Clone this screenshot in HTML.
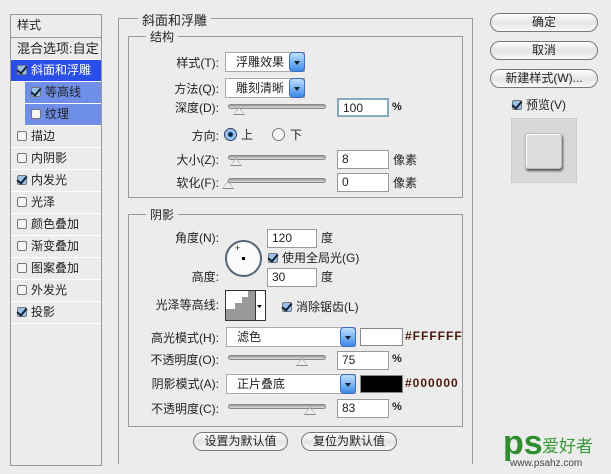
<!DOCTYPE html>
<html><head><meta charset="utf-8"><style>
*{box-sizing:border-box;margin:0;padding:0}
body{width:611px;height:474px;background:#ececec;position:relative;overflow:hidden;font-family:"Liberation Sans","Noto Sans CJK SC",sans-serif;font-size:12px;color:#222}
.a{position:absolute;white-space:nowrap}
.lp{position:absolute;left:10px;top:14px;width:92px;height:452px;border:1px solid #999;background:#ececec}
.row{position:absolute;left:0;width:90px;height:22px;line-height:21px;padding-left:6px;border-bottom:1px solid #fff}
.cb{display:inline-block;width:10px;height:10px;border:1px solid #777;border-radius:2px;background:#f6f6f6;vertical-align:-1px;margin-right:4px;position:relative}
.cb.on::after{content:"";position:absolute;left:1px;top:-2px;width:4px;height:8px;border:solid #123;border-width:0 2px 2px 0;transform:rotate(40deg)}
.cb.on{background:#9cc0ec}
.box{position:absolute;border:1px solid #999}
.lbl{position:absolute;text-align:right;white-space:nowrap}
.dd{position:absolute;height:20px;background:#fff;border:1px solid #aaa;line-height:18px;padding-left:10px}
.dd i{position:absolute;right:-1px;top:-1px;width:16px;height:20px;border-radius:4px;background:linear-gradient(#bfe0ff,#3d8ae8);border:1px solid #3a6cc0}
.dd i::after{content:"";position:absolute;left:4px;top:8px;border:3px solid transparent;border-top:4px solid #123}
.in{position:absolute;height:19px;background:#fff;border:1px solid #999;line-height:17px;padding-left:4px}
.tr{position:absolute;height:5px;width:98px;border-radius:3px;background:linear-gradient(#999,#ddd);border:1px solid #888}
.th{position:absolute;width:0;height:0;border-left:6px solid transparent;border-right:6px solid transparent;border-bottom:8px solid #888}
.th::after{content:"";position:absolute;left:-5px;top:1px;border-left:5px solid transparent;border-right:5px solid transparent;border-bottom:6px solid #eee}
.btn{position:absolute;height:19px;border:1px solid #777;border-radius:10px;background:linear-gradient(#fff,#e4e4e4 50%,#f8f8f8);text-align:center;line-height:17px}
</style></head><body>
<div class="lp">
<div class="row" style="top:0;height:23px;border-bottom:1px solid #999">样式</div>
<div class="row" style="top:23px;font-size:13px">混合选项:自定</div>
<div class="row" style="top:45px;background:#2a4ee8;color:#fff"><span class="cb on"></span>斜面和浮雕</div>
<div class="row" style="top:67px;left:14px;width:76px;background:#6f8ee8"><span class="cb on"></span>等高线</div>
<div class="row" style="top:89px;left:14px;width:76px;background:#6f8ee8"><span class="cb"></span>纹理</div>
<div class="row" style="top:111px"><span class="cb"></span>描边</div>
<div class="row" style="top:133px"><span class="cb"></span>内阴影</div>
<div class="row" style="top:155px"><span class="cb on"></span>内发光</div>
<div class="row" style="top:177px"><span class="cb"></span>光泽</div>
<div class="row" style="top:199px"><span class="cb"></span>颜色叠加</div>
<div class="row" style="top:221px"><span class="cb"></span>渐变叠加</div>
<div class="row" style="top:243px"><span class="cb"></span>图案叠加</div>
<div class="row" style="top:265px"><span class="cb"></span>外发光</div>
<div class="row" style="top:287px"><span class="cb on"></span>投影</div>
</div>
<div class="box" style="left:118px;top:18px;width:355px;height:446px;border-bottom:none"></div>
<div class="a" style="left:138px;top:10px;background:#ececec;padding:0 4px;font-size:13px">斜面和浮雕</div>
<div class="box" style="left:128px;top:36px;width:335px;height:162px"></div>
<div class="a" style="left:146px;top:28px;background:#ececec;padding:0 4px">结构</div>
<div class="lbl" style="right:392px;top:54px">样式(T):</div>
<div class="dd" style="left:225px;top:52px;width:80px">浮雕效果<i></i></div>
<div class="lbl" style="right:392px;top:80px">方法(Q):</div>
<div class="dd" style="left:225px;top:78px;width:80px">雕刻清晰<i></i></div>
<div class="lbl" style="right:392px;top:99px">深度(D):</div>
<div class="tr" style="left:228px;top:104px"></div><div class="th" style="left:233px;top:107px"></div>
<div class="in" style="left:337px;top:98px;width:52px;border:2px solid #8ab;">100</div><div class="a" style="left:392px;top:101px;font-weight:bold;font-size:11px">%</div>
<div class="lbl" style="right:392px;top:127px">方向:</div>
<div class="a" style="left:224px;top:128px;width:13px;height:13px;border-radius:50%;border:1px solid #336;background:radial-gradient(#123 25%,#7ab4ef 35%,#cfe4fa)"></div>
<div class="a" style="left:241px;top:126px">上</div>
<div class="a" style="left:272px;top:128px;width:13px;height:13px;border-radius:50%;border:1px solid #777;background:#f6f6f6"></div>
<div class="a" style="left:290px;top:126px">下</div>
<div class="lbl" style="right:392px;top:151px">大小(Z):</div>
<div class="tr" style="left:228px;top:155px"></div><div class="th" style="left:230px;top:158px"></div>
<div class="in" style="left:337px;top:150px;width:52px">8</div><div class="a" style="left:393px;top:151px">像素</div>
<div class="lbl" style="right:392px;top:174px">软化(F):</div>
<div class="tr" style="left:228px;top:178px"></div><div class="th" style="left:222px;top:181px"></div>
<div class="in" style="left:337px;top:173px;width:52px">0</div><div class="a" style="left:393px;top:174px">像素</div>

<div class="box" style="left:128px;top:214px;width:335px;height:213px"></div>
<div class="a" style="left:146px;top:206px;background:#ececec;padding:0 4px">阴影</div>
<div class="lbl" style="right:392px;top:229px">角度(N):</div>
<div class="a" style="left:225px;top:240px;width:37px;height:37px;border-radius:50%;border:2px solid #567;background:#fafafa"></div>
<div class="a" style="left:242px;top:257px;width:3px;height:3px;background:#000"></div>
<div class="a" style="left:235px;top:243px;font-size:9px">+</div>
<div class="in" style="left:267px;top:229px;width:50px">120</div><div class="a" style="left:321px;top:229px">度</div>
<div class="a" style="left:268px;top:249px"><span class="cb on"></span>使用全局光(G)</div>
<div class="lbl" style="right:392px;top:268px">高度:</div>
<div class="in" style="left:267px;top:268px;width:50px">30</div><div class="a" style="left:321px;top:268px">度</div>
<div class="lbl" style="right:392px;top:296px">光泽等高线:</div>
<div class="a" style="left:225px;top:290px;width:41px;height:31px;border:1px solid #333;background:#fff">
<svg width="39" height="29" style="position:absolute;left:0;top:0"><path d="M0 29V18H9V12H16V6H22V0H29V29Z" fill="#999"/><path d="M31 14l5 0-2.5 3z" fill="#000"/><line x1="29.5" y1="0" x2="29.5" y2="29" stroke="#333"/></svg></div>
<div class="a" style="left:282px;top:298px"><span class="cb on"></span>消除锯齿(L)</div>
<div class="lbl" style="right:392px;top:329px">高光模式(H):</div>
<div class="dd" style="left:226px;top:327px;width:130px">滤色<i></i></div>
<div class="a" style="left:360px;top:328px;width:43px;height:18px;background:#fff;border:1px solid #888"></div>
<div class="a" style="left:405px;top:329px;font-weight:bold;color:#4a1a0a;letter-spacing:1px">#FFFFFF</div>
<div class="lbl" style="right:392px;top:351px">不透明度(O):</div>
<div class="tr" style="left:228px;top:355px"></div><div class="th" style="left:296px;top:358px"></div>
<div class="in" style="left:337px;top:351px;width:52px">75</div><div class="a" style="left:392px;top:353px;font-weight:bold;font-size:11px">%</div>
<div class="lbl" style="right:392px;top:375px">阴影模式(A):</div>
<div class="dd" style="left:226px;top:374px;width:130px">正片叠底<i></i></div>
<div class="a" style="left:360px;top:375px;width:43px;height:18px;background:#000;border:1px solid #888"></div>
<div class="a" style="left:405px;top:376px;font-weight:bold;color:#4a1a0a;letter-spacing:1px">#000000</div>
<div class="lbl" style="right:392px;top:400px">不透明度(C):</div>
<div class="tr" style="left:228px;top:404px"></div><div class="th" style="left:304px;top:407px"></div>
<div class="in" style="left:337px;top:399px;width:52px">83</div><div class="a" style="left:392px;top:401px;font-weight:bold;font-size:11px">%</div>
<div class="btn" style="left:193px;top:432px;width:95px">设置为默认值</div>
<div class="btn" style="left:301px;top:432px;width:96px">复位为默认值</div>

<div class="btn" style="left:490px;top:13px;width:108px">确定</div>
<div class="btn" style="left:490px;top:41px;width:108px">取消</div>
<div class="btn" style="left:490px;top:69px;width:108px">新建样式(W)...</div>
<div class="a" style="left:512px;top:96px"><span class="cb on"></span>预览(V)</div>
<div class="a" style="left:511px;top:118px;width:66px;height:65px;background:#d8d8d8;border:1px solid #ccc"></div>
<div class="a" style="left:525px;top:133px;width:37px;height:36px;background:#ddd;border-radius:3px;box-shadow:1px 2px 2px #555,inset 1px 1px 0 #fff;border:1px solid #bbb"></div>
<div class="a" style="left:503px;top:428px;font-size:34px;font-weight:bold;color:#2f8f2f;line-height:30px">ps</div>
<div class="a" style="left:542px;top:432px;font-size:17px;color:#3a9a3a">爱好者</div>
<div class="a" style="left:510px;top:458px;font-size:10px;color:#444">www.psahz.com</div>
</body></html>
